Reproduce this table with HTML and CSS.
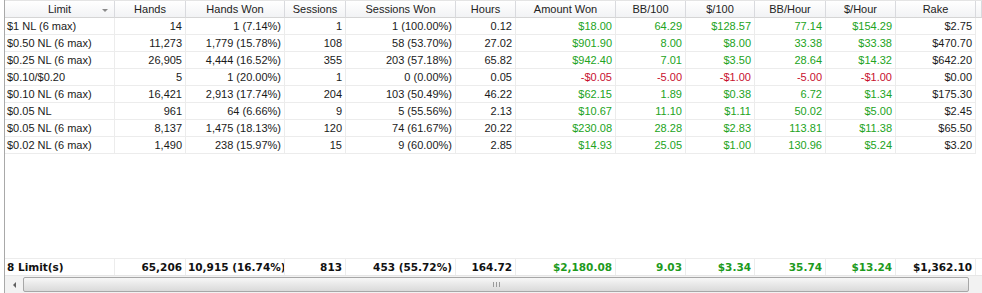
FILE: index.html
```html
<!DOCTYPE html>
<html>
<head>
<meta charset="utf-8">
<link rel="stylesheet" href="styles.css">
</head>
<body>
<div class="frame">
  <div class="grid">
    <div class="row head">
      <div class="c h limit">Limit<span class="sort"></span></div>
      <div class="c h">Hands</div>
      <div class="c h">Hands Won</div>
      <div class="c h">Sessions</div>
      <div class="c h">Sessions Won</div>
      <div class="c h">Hours</div>
      <div class="c h">Amount Won</div>
      <div class="c h">BB/100</div>
      <div class="c h">$/100</div>
      <div class="c h">BB/Hour</div>
      <div class="c h">$/Hour</div>
      <div class="c h">Rake</div>
      <div class="c h fill"></div>
    </div>
    <div class="rows">
      <div class="row">
        <div class="c l">$1 NL (6 max)</div><div class="c">14</div><div class="c">1 (7.14%)</div><div class="c">1</div><div class="c">1 (100.00%)</div><div class="c">0.12</div><div class="c g">$18.00</div><div class="c g">64.29</div><div class="c g">$128.57</div><div class="c g">77.14</div><div class="c g">$154.29</div><div class="c">$2.75</div><div class="c fill"></div>
      </div>
      <div class="row">
        <div class="c l">$0.50 NL (6 max)</div><div class="c">11,273</div><div class="c">1,779 (15.78%)</div><div class="c">108</div><div class="c">58 (53.70%)</div><div class="c">27.02</div><div class="c g">$901.90</div><div class="c g">8.00</div><div class="c g">$8.00</div><div class="c g">33.38</div><div class="c g">$33.38</div><div class="c">$470.70</div><div class="c fill"></div>
      </div>
      <div class="row">
        <div class="c l">$0.25 NL (6 max)</div><div class="c">26,905</div><div class="c">4,444 (16.52%)</div><div class="c">355</div><div class="c">203 (57.18%)</div><div class="c">65.82</div><div class="c g">$942.40</div><div class="c g">7.01</div><div class="c g">$3.50</div><div class="c g">28.64</div><div class="c g">$14.32</div><div class="c">$642.20</div><div class="c fill"></div>
      </div>
      <div class="row">
        <div class="c l">$0.10/$0.20</div><div class="c">5</div><div class="c">1 (20.00%)</div><div class="c">1</div><div class="c">0 (0.00%)</div><div class="c">0.05</div><div class="c r">-$0.05</div><div class="c r">-5.00</div><div class="c r">-$1.00</div><div class="c r">-5.00</div><div class="c r">-$1.00</div><div class="c">$0.00</div><div class="c fill"></div>
      </div>
      <div class="row">
        <div class="c l">$0.10 NL (6 max)</div><div class="c">16,421</div><div class="c">2,913 (17.74%)</div><div class="c">204</div><div class="c">103 (50.49%)</div><div class="c">46.22</div><div class="c g">$62.15</div><div class="c g">1.89</div><div class="c g">$0.38</div><div class="c g">6.72</div><div class="c g">$1.34</div><div class="c">$175.30</div><div class="c fill"></div>
      </div>
      <div class="row">
        <div class="c l">$0.05 NL</div><div class="c">961</div><div class="c">64 (6.66%)</div><div class="c">9</div><div class="c">5 (55.56%)</div><div class="c">2.13</div><div class="c g">$10.67</div><div class="c g">11.10</div><div class="c g">$1.11</div><div class="c g">50.02</div><div class="c g">$5.00</div><div class="c">$2.45</div><div class="c fill"></div>
      </div>
      <div class="row">
        <div class="c l">$0.05 NL (6 max)</div><div class="c">8,137</div><div class="c">1,475 (18.13%)</div><div class="c">120</div><div class="c">74 (61.67%)</div><div class="c">20.22</div><div class="c g">$230.08</div><div class="c g">28.28</div><div class="c g">$2.83</div><div class="c g">113.81</div><div class="c g">$11.38</div><div class="c">$65.50</div><div class="c fill"></div>
      </div>
      <div class="row">
        <div class="c l">$0.02 NL (6 max)</div><div class="c">1,490</div><div class="c">238 (15.97%)</div><div class="c">15</div><div class="c">9 (60.00%)</div><div class="c">2.85</div><div class="c g">$14.93</div><div class="c g">25.05</div><div class="c g">$1.00</div><div class="c g">130.96</div><div class="c g">$5.24</div><div class="c">$3.20</div><div class="c fill"></div>
      </div>
    </div>
    <div class="row foot">
      <div class="c l">8 Limit(s)</div><div class="c">65,206</div><div class="c">10,915 (16.74%)</div><div class="c">813</div><div class="c">453 (55.72%)</div><div class="c">164.72</div><div class="c g">$2,180.08</div><div class="c g">9.03</div><div class="c g">$3.34</div><div class="c g">35.74</div><div class="c g">$13.24</div><div class="c">$1,362.10</div><div class="c fill"></div>
    </div>
    <div class="hscroll">
      <div class="arrow"><span class="tri"></span></div>
      <div class="thumb"><span class="grip"></span></div>
    </div>
  </div>
</div>
</body>
</html>
```

FILE: styles.css
```css
html, body {
  margin: 0;
  padding: 0;
  background: #ffffff;
}

body {
  width: 982px;
  height: 293px;
  overflow: hidden;
  font-family: "Liberation Sans", Arial, sans-serif;
  font-size: 11px;
  color: #1a1a1a;
}

.frame {
  height: 293px;
  padding-left: 4px;
  box-sizing: border-box;
}

.grid {
  height: 293px;
  border-left: 1px solid #a9a9a9;
  display: flex;
  flex-direction: column;
}

.row {
  display: grid;
  grid-template-columns: 110px 71px 99px 61px 110px 60px 100px 70px 69px 71px 70px 80px 1fr;
}

.c {
  height: 16px;
  line-height: 16px;
  padding: 0 3px 0 2px;
  text-align: right;
  white-space: nowrap;
  overflow: hidden;
  border-right: 1px solid #ececec;
  border-bottom: 1px solid #ececec;
}

.c.fill {
  border-right: none;
  border-bottom: none;
}

.c.l {
  text-align: left;
}

.g {
  color: #22a322;
}

.r {
  color: #c8102e;
}

.head {
  background: linear-gradient(#ffffff, #f1f2f4);
  border-top: 1px solid #e4e4e4;
}

.c.h {
  height: 16px;
  line-height: 16px;
  text-align: center;
  padding: 0;
  color: #222;
  border-right: 1px solid #d9dade;
  border-bottom: 1px solid #d5d5d5;
  position: relative;
}

.c.h.fill {
  border-bottom: 1px solid #d5d5d5;
}

.sort {
  position: absolute;
  right: 6px;
  top: 8px;
  width: 0;
  height: 0;
  border-left: 3px solid transparent;
  border-right: 3px solid transparent;
  border-top: 3px solid #8a8a8a;
}

.rows {
  flex: 1;
}

.foot .c {
  font-family: "DejaVu Sans", Verdana, sans-serif;
  font-size: 10.5px;
  font-weight: bold;
  border-top: 1px solid #ececec;
  border-bottom: none;
  color: #111;
}

.foot .c.g {
  color: #1d9a1d;
}

.hscroll {
  height: 17px;
  display: flex;
  align-items: center;
  background: #f2f2f2;
  border-top: 1px solid #e6e6e6;
}

.arrow {
  width: 18px;
  height: 16px;
  display: flex;
  align-items: center;
  justify-content: center;
}

.tri {
  width: 0;
  height: 0;
  border-top: 3px solid transparent;
  border-bottom: 3px solid transparent;
  border-right: 3px solid #606060;
}

.thumb {
  width: 944px;
  height: 13px;
  border: 1px solid #a7a7a7;
  border-radius: 2px;
  background: linear-gradient(#f7f7f7, #e8e8e8 50%, #dadada);
  display: flex;
  align-items: center;
  justify-content: center;
}

.grip {
  width: 7px;
  height: 5px;
  background: repeating-linear-gradient(90deg, #9a9a9a 0 1px, transparent 1px 3px);
}
```
